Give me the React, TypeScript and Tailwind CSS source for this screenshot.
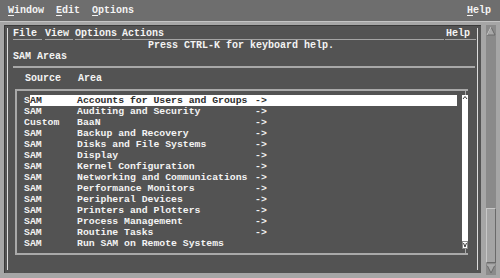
import React from "react";

const rows: [string, string, boolean][] = [
  ["SAM", "Accounts for Users and Groups", true],
  ["SAM", "Auditing and Security", true],
  ["Custom", "BaaN", true],
  ["SAM", "Backup and Recovery", true],
  ["SAM", "Disks and File Systems", true],
  ["SAM", "Display", true],
  ["SAM", "Kernel Configuration", true],
  ["SAM", "Networking and Communications", true],
  ["SAM", "Performance Monitors", true],
  ["SAM", "Peripheral Devices", true],
  ["SAM", "Printers and Plotters", true],
  ["SAM", "Process Management", true],
  ["SAM", "Routine Tasks", true],
  ["SAM", "Run SAM on Remote Systems", false],
];

export default function App() {
  return (
    <div
      className="w-[500px] h-[278px] flex flex-col bg-[#a6a6a6] text-[10px] font-bold text-[#f4f4f4] overflow-hidden"
      style={{ fontFamily: '"Liberation Mono", "DejaVu Sans Mono", monospace' }}
    >
      {/* top menubar */}
      <div className="h-[21px] bg-[#6e6e6e] flex items-center pl-[8px] pr-[9px] gap-[12px] leading-[11px] whitespace-pre">
        <span><span className="underline underline-offset-2">W</span>indow</span>
        <span><span className="underline underline-offset-2">E</span>dit</span>
        <span><span className="underline underline-offset-2">O</span>ptions</span>
        <span className="ml-auto"><span className="underline underline-offset-2">H</span>elp</span>
      </div>

      {/* body */}
      <div className="flex-1 flex border-t border-[#c4c4c4] pl-[4px] pt-[3px]">
        {/* terminal */}
        <div className="w-[477px] mb-[5px] bg-[#535353] border-l border-t border-[#3a3a3a] flex">
          <div className="flex-1 ml-[2px] mr-[3px] mt-[2px] mb-[3px] border-l border-r border-[#dcdcdc] flex flex-col whitespace-pre leading-[11px]">
            {/* terminal menubar */}
            <div className="flex h-[12px]">
              <div className="w-[5px]" />
              <div className="w-[29px] border-b border-[#a4a4a4]">File</div>
              <div className="w-[3px]" />
              <div className="w-[28px] border-b border-[#a4a4a4]">View</div>
              <div className="w-[2px]" />
              <div className="w-[45px] border-b border-[#a4a4a4]">Options</div>
              <div className="w-[2px]" />
              <div className="flex-1 border-b border-[#a4a4a4]">Actions</div>
              <div className="w-[1px]" />
              <div className="w-[31px] border-b border-[#a4a4a4] pl-[1px]">Help</div>
              <div className="w-[1px]" />
            </div>
            <div className="h-[11px] pl-[140px]">Press CTRL-K for keyboard help.</div>
            <div className="h-[11px] pl-[5px]">SAM Areas</div>
            <div className="mt-[4px] ml-[5px] mr-[2px] h-[2px] bg-[#a8a8a8]" />
            <div className="mt-[5px] h-[11px] pl-[17px] flex">
              <span className="w-[53px]">Source</span>
              <span>Area</span>
            </div>

            {/* list box */}
            <div className="mt-[5px] ml-[7px] w-[453px] flex border-l-2 border-t-2 border-b-2 border-[#a9a9a9]">
              <div className="flex-1 pt-[4px] pb-[4px] flex flex-col text-[9.8px]">
                {rows.map(([src, area, arrow], i) =>
                  i === 0 ? (
                    <div key={i} className="h-[11px] flex pl-[7px]">
                      <span className="w-[6px]">S</span>
                      <div className="w-[427px] flex bg-white text-[#2e2e2e]">
                        <span className="w-[47px]">AM</span>
                        <span className="w-[178px]">{area}</span>
                        <span>-&gt;</span>
                      </div>
                    </div>
                  ) : (
                    <div key={i} className="h-[11px] flex pl-[7px]">
                      <span className="w-[53px]">{src}</span>
                      <span className="w-[178px]">{area}</span>
                      {arrow && <span>-&gt;</span>}
                    </div>
                  )
                )}
              </div>
              {/* list scroll column */}
              <div className="w-[6px] flex flex-col items-center">
                <div className="h-[4px] w-[1px] bg-[#a9a9a9]" />
                <div className="flex-1 w-[6px] bg-white flex flex-col justify-between items-center">
                  <svg width="6" height="6" viewBox="0 0 6 6">
                    <polyline points="1,4 3,1.5 5,4" fill="none" stroke="#3a3a3a" strokeWidth="1" />
                  </svg>
                  <svg width="6" height="8" viewBox="0 0 6 8">
                    <rect x="0.5" y="0.5" width="5" height="7" fill="white" stroke="#8a8a8a" strokeWidth="1" />
                    <polyline points="1.5,2 3,6 4.5,2" fill="none" stroke="#3a3a3a" strokeWidth="1" />
                  </svg>
                </div>
                <div className="h-[4px] w-[1px] bg-[#a9a9a9]" />
              </div>
            </div>
          </div>
        </div>

        {/* right scrollbar */}
        <div className="flex-1 pl-[5px] pr-[4px] mb-[3px] flex">
          <div className="w-[10px] bg-[#8a8a8a] flex flex-col">
            <svg width="10" height="12" viewBox="0 0 10 12">
              <polygon points="5,2 9,10 1,10" fill="#a8a8a8" stroke="#6a6a6a" strokeWidth="1" />
              <line x1="5" y1="2" x2="1" y2="10" stroke="#cfcfcf" strokeWidth="1" />
            </svg>
            <div className="flex-1" />
            <div className="h-[55px] bg-[#a4a4a4] border-t border-l border-[#c8c8c8] border-r border-b border-r-[#6a6a6a] border-b-[#6a6a6a]" />
            <svg width="10" height="12" viewBox="0 0 10 12">
              <polygon points="1,2 9,2 5,10" fill="#a8a8a8" stroke="#6a6a6a" strokeWidth="1" />
              <line x1="1" y1="2" x2="9" y2="2" stroke="#cfcfcf" strokeWidth="1" />
            </svg>
          </div>
        </div>
      </div>
    </div>
  );
}
